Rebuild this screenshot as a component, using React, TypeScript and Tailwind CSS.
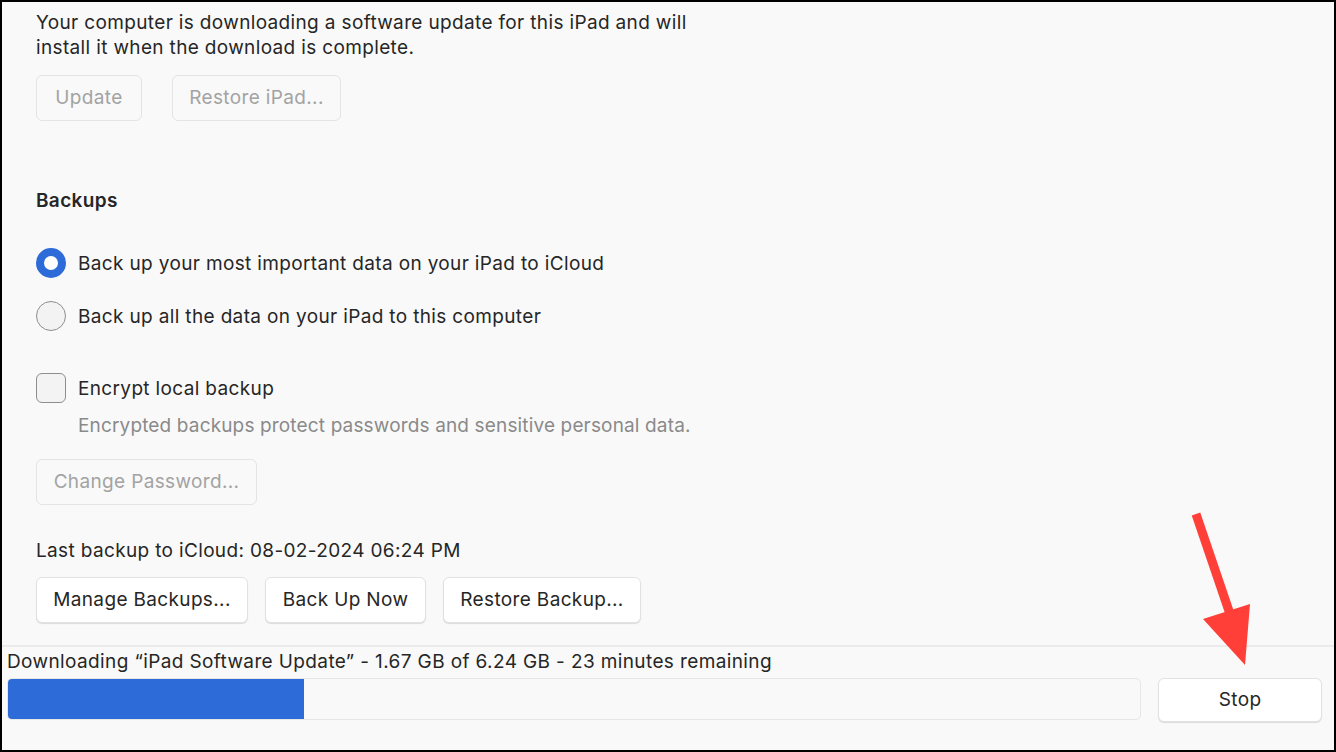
import React from 'react';

const font = { fontFamily: 'Inter, "Noto Sans", sans-serif' };

function DisabledButton({ label, className = '' }: { label: string; className?: string }) {
  return (
    <button className={`h-[46px] rounded-[6px] border border-[#e4e4e4] bg-[#f9f9f9] text-[19px] tracking-[0.35px] text-[#a3a3a3] ${className}`}>
      {label}
    </button>
  );
}

function Button({ label, className = '' }: { label: string; className?: string }) {
  return (
    <button className={`rounded-[6px] border border-[#e2e2e2] bg-white text-[19px] tracking-[0.35px] text-[#262626] shadow-[0_1px_1px_rgba(0,0,0,0.12)] ${className}`}>
      {label}
    </button>
  );
}

export default function App() {
  return (
    <div style={font} className="relative h-[752px] w-[1336px] overflow-hidden border-2 border-black bg-[#f9f9f9] text-[#262626]">
      {/* Main settings */}
      <div className="flex h-[643px] flex-col pl-[34px] pt-[8px] tracking-[0.35px]">
        <p className="text-[19px] leading-[25px]">
          Your computer is downloading a software update for this iPad and will
          <br />
          install it when the download is complete.
        </p>
        <div className="mt-[15px] flex gap-[30px]">
          <DisabledButton label="Update" className="w-[106px]" />
          <DisabledButton label="Restore iPad..." className="w-[169px]" />
        </div>

        <h2 className="mt-[67px] text-[19px] font-semibold leading-[25px]">Backups</h2>

        <div className="mt-[35px] flex items-center gap-[12px]">
          <span className="h-[30px] w-[30px] rounded-full border-[8px] border-[#2c6bd8] bg-white" />
          <span className="text-[19px] leading-[25px]">Back up your most important data on your iPad to iCloud</span>
        </div>
        <div className="mt-[23px] flex items-center gap-[12px]">
          <span className="h-[30px] w-[30px] rounded-full border border-[#8e8e8e] bg-[#f3f3f3]" />
          <span className="text-[19px] leading-[25px]">Back up all the data on your iPad to this computer</span>
        </div>

        <div className="mt-[42px] flex items-center gap-[12px]">
          <span className="h-[30px] w-[30px] rounded-[6px] border border-[#8e8e8e] bg-[#f3f3f3]" />
          <span className="text-[19px] leading-[25px]">Encrypt local backup</span>
        </div>
        <p className="mt-[10px] pl-[42px] text-[19px] leading-[25px] tracking-[0.15px] text-[#8a8a8a]">
          Encrypted backups protect passwords and sensitive personal data.
        </p>
        <div className="mt-[21px] flex">
          <DisabledButton label="Change Password..." className="w-[221px]" />
        </div>

        <p className="mt-[33px] text-[19px] leading-[25px]">Last backup to iCloud: 08-02-2024 06:24 PM</p>
        <div className="mt-[14px] flex gap-[17px]">
          <Button label="Manage Backups..." className="h-[46px] w-[212px]" />
          <Button label="Back Up Now" className="h-[46px] w-[161px]" />
          <Button label="Restore Backup..." className="h-[46px] w-[198px]" />
        </div>
      </div>

      {/* Download status */}
      <div className="border-t-2 border-[#ebebeb] pl-[5px] pr-[12px] pt-[3px]">
        <p className="text-[19px] leading-[24px] tracking-[0.38px]">
          Downloading “iPad Software Update” - 1.67 GB of 6.24 GB - 23 minutes remaining
        </p>
        <div className="mt-[4px] flex items-start gap-[17px]">
          <div className="h-[42px] w-[1136px] overflow-hidden rounded-[5px] border border-[#e6e6e6] bg-[#f9f9f9]">
            <div className="h-full w-[296px] bg-[#2c6bd8]" />
          </div>
          <Button label="Stop" className="h-[44px] w-[164px]" />
        </div>
      </div>

      {/* Annotation arrow */}
      <svg className="absolute left-0 top-0" width="1336" height="752" viewBox="0 0 1336 752">
        <line x1="1194" y1="512" x2="1228" y2="612" stroke="#ff3f38" strokeWidth="9" />
        <polygon points="1201,617 1248,602 1243,663" fill="#ff3f38" />
      </svg>
    </div>
  );
}
